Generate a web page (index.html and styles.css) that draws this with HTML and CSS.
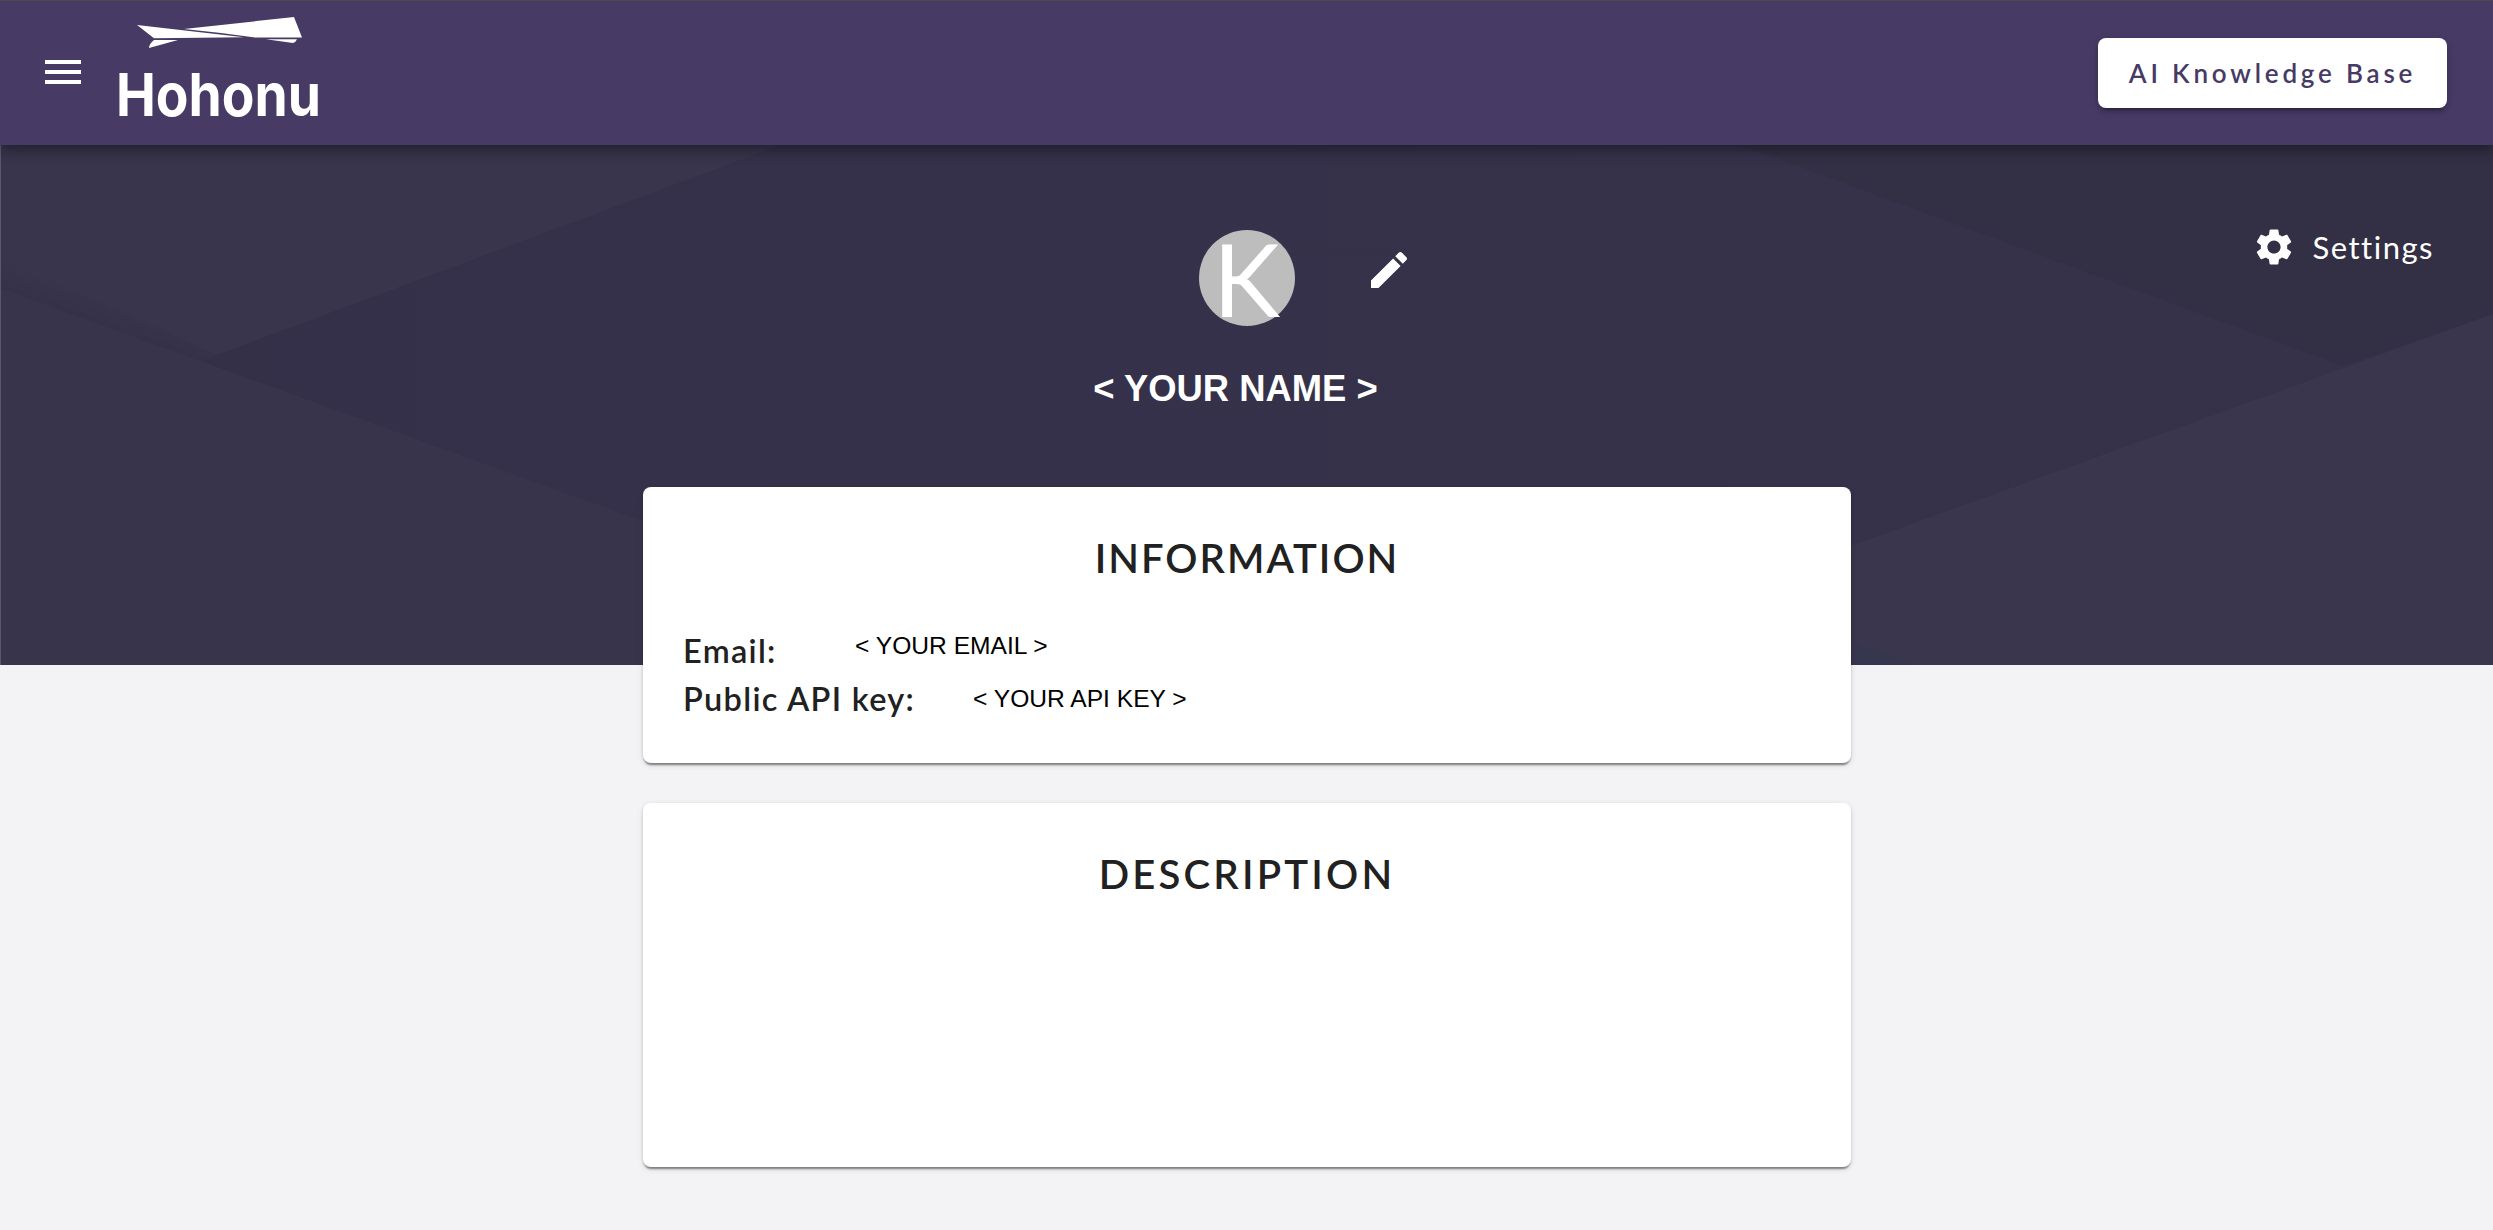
FILE: index.html
```html
<!DOCTYPE html>
<html lang="en">
<head>
<meta charset="utf-8">
<title>Hohonu</title>
<link rel="stylesheet" href="styles.css">
</head>
<body>
<header class="topbar">
  <svg class="icon menu" viewBox="0 0 24 24"><path d="M3 18h18v-2H3v2zm0-5h18v-2H3v2zm0-7v2h18V6H3z"/></svg>
  <svg class="logo" viewBox="0 0 210 120">
    <path d="M22 15 L129 27.3 L39 28.3Z"/>
    <path d="M69 19 L179 7 L187 27.5 L140 27.5 Q105 22.5 69 19Z"/>
    <path d="M39 30 L63 30 L34 38 Q34 34 39 30Z"/>
    <path d="M151 29.3 L182 29.3 Q181 32 178 33Z"/>
    <text class="wordmark" x="1" y="106" textLength="205" lengthAdjust="spacingAndGlyphs">Hohonu</text>
  </svg>
  <button class="kb">AI Knowledge Base</button>
</header>
<section class="hero">
  <svg class="facets" viewBox="0 0 2493 520" preserveAspectRatio="none">
    <defs>
      <linearGradient id="mid" x1="0" x2="1"><stop offset="0" stop-color="#342f47"/><stop offset=".2" stop-color="#35314a"/><stop offset="1" stop-color="#35324a"/></linearGradient>
      <linearGradient id="fold" gradientUnits="userSpaceOnUse" x1="100" y1="150" x2="90" y2="178"><stop offset="0" stop-color="#342f47" stop-opacity="0"/><stop offset="1" stop-color="#342f47" stop-opacity=".7"/></linearGradient>
    </defs>
    <rect width="2493" height="520" fill="url(#mid)"/>
    <path d="M0 0H780L200 216L0 143Z" fill="#38354c"/>
    <path d="M0 110L216 210L200 216L0 143Z" fill="url(#fold)"/>
    <path d="M0 143L200 216L1040 520H0Z" fill="#37344c"/>
    <path d="M1740 0H2493V169L2343 221Z" fill="#332f45"/>
    <path d="M2493 169L1520 520H2493Z" fill="#39364d"/>
    <path d="M1851 496L1915 520H1851Z" fill="#37364f"/>
  </svg>
  <div class="person">
    <span class="avatar">K</span>
    <svg class="icon edit" viewBox="0 0 24 24"><path d="M3 17.25V21h3.75L17.81 9.94l-3.75-3.75L3 17.25zM20.71 7.04c.39-.39.39-1.02 0-1.41l-2.34-2.34c-.39-.39-1.02-.39-1.41 0l-1.83 1.83 3.75 3.75 1.83-1.83z"/></svg>
  </div>
  <div class="name">&lt; YOUR NAME &gt;</div>
  <a class="settings">
    <svg class="icon gear" viewBox="0 0 24 24"><path d="M19.14 12.94c.04-.3.06-.61.06-.94 0-.32-.02-.64-.07-.94l2.03-1.58c.18-.14.23-.41.12-.61l-1.92-3.32c-.12-.22-.37-.29-.59-.22l-2.39.96c-.5-.38-1.03-.7-1.62-.94l-.36-2.54c-.04-.24-.24-.41-.48-.41h-3.84c-.24 0-.43.17-.47.41l-.36 2.54c-.59.24-1.13.57-1.62.94l-2.39-.96c-.22-.08-.47 0-.59.22L2.74 8.87c-.12.21-.08.47.12.61l2.03 1.58c-.05.3-.09.63-.09.94s.02.64.07.94l-2.03 1.58c-.18.14-.23.41-.12.61l1.92 3.32c.12.22.37.29.59.22l2.39-.96c.5.38 1.03.7 1.62.94l.36 2.54c.05.24.24.41.48.41h3.84c.24 0 .44-.17.47-.41l.36-2.54c.59-.24 1.13-.56 1.62-.94l2.39.96c.22.08.47 0 .59-.22l1.92-3.32c.12-.22.07-.47-.12-.61l-2.01-1.58zM12 15.6c-1.98 0-3.6-1.62-3.6-3.6s1.62-3.6 3.6-3.6 3.6 1.62 3.6 3.6-1.62 3.6-3.6 3.6z"/></svg>
    <span>Settings</span>
  </a>
</section>
<main class="cards">
  <section class="card info">
    <h2 class="title t-info">INFORMATION</h2>
    <div class="row"><span class="label l-email">Email:</span><span class="value v-email">&lt; YOUR EMAIL &gt;</span></div>
    <div class="row"><span class="label l-key">Public API key:</span><span class="value v-key">&lt; YOUR API KEY &gt;</span></div>
  </section>
  <section class="card desc">
    <h2 class="title t-desc">DESCRIPTION</h2>
  </section>
</main>
</body>
</html>
```
FILE: styles.css
```css
* { box-sizing: border-box; }
body {
  margin: 0;
  height: 1230px;
  overflow: hidden;
  background: #f3f3f6;
  font-family: Lato, "Liberation Sans", sans-serif;
  color: #212121;
}
.icon { width: 48px; height: 48px; fill: #fff; flex: none; }
.topbar {
  position: relative;
  z-index: 2;
  display: flex;
  align-items: flex-start;
  height: 145px;
  padding: 0 46px 0 39px;
  background: #473a65;
  border-top: 1px solid #4a4a4a;
  box-shadow: 0 4px 8px -2px rgba(0,0,0,.2), 0 8px 10px rgba(0,0,0,.14), 0 2px 20px rgba(0,0,0,.12);
}
.menu { margin-top: 47px; }
.logo { width: 210px; height: 120px; margin: 9px 0 0 28px; fill: #fff; overflow: visible; }
.wordmark { font: 700 59px Inter, sans-serif; }
.kb {
  width: 349px;
  height: 70px;
  margin: 37px 0 0 auto;
  padding: 0;
  border: 0;
  border-radius: 8px;
  background: #fff;
  color: #473a65;
  font: 600 26px/70px Lato, sans-serif;
  letter-spacing: 3.8px;
  white-space: nowrap;
  box-shadow: 0 6px 2px -4px rgba(0,0,0,.2), 0 4px 4px rgba(0,0,0,.14), 0 2px 10px rgba(0,0,0,.12);
}
.hero {
  position: relative;
  height: 520px;
  padding-top: 85px;
  color: #fff;
  border-left: 1px solid #5b586c;
}
.facets { position: absolute; inset: 0; width: 100%; height: 100%; }
.person {
  position: relative;
  display: flex;
  justify-content: center;
  gap: 70px;
  margin-left: 117px;
}
.avatar {
  width: 96px;
  height: 96px;
  border-radius: 50%;
  background: #bdbdbd;
  font-size: 101px;
  line-height: 96px;
  text-align: center;
}
.edit { margin-top: 16px; }
.name {
  position: relative;
  margin: 41px 23px 0 0;
  font: 700 36.4px/44px "Liberation Sans", Arial, sans-serif;
  text-align: center;
}
.settings {
  position: absolute;
  top: 78px;
  right: 59px;
  display: flex;
  align-items: center;
  gap: 17px;
  font-size: 31px;
  line-height: 48px;
  letter-spacing: 1.5px;
}
.gear { width: 44px; height: 44px; }
.cards {
  position: relative;
  display: flex;
  flex-direction: column;
  gap: 40px;
  width: 1208px;
  margin: -178px 0 0 643px;
}
.card {
  background: #fff;
  border-radius: 8px;
  padding: 47px 40px 0;
  box-shadow: 0 4px 2px -2px rgba(0,0,0,.3), 0 2px 2px rgba(0,0,0,.18), 0 2px 6px rgba(0,0,0,.12);
}
.info { height: 276px; }
.desc { height: 364px; }
.title { margin: 0 0 45px; font-size: 40px; line-height: 48px; font-weight: 600; text-align: center; }
.t-info { letter-spacing: 2px; }
.t-desc { letter-spacing: 3.2px; }
.row { display: flex; height: 48px; line-height: 48px; white-space: nowrap; }
.label { font-size: 32.5px; font-weight: 600; letter-spacing: 1.3px; }
.value { font: 24.6px/48px "Liberation Sans", Arial, sans-serif; color: #000; }
.l-email { width: 172px; }
.v-email { margin-top: -5px; }
.l-key { width: 290px; }
```
